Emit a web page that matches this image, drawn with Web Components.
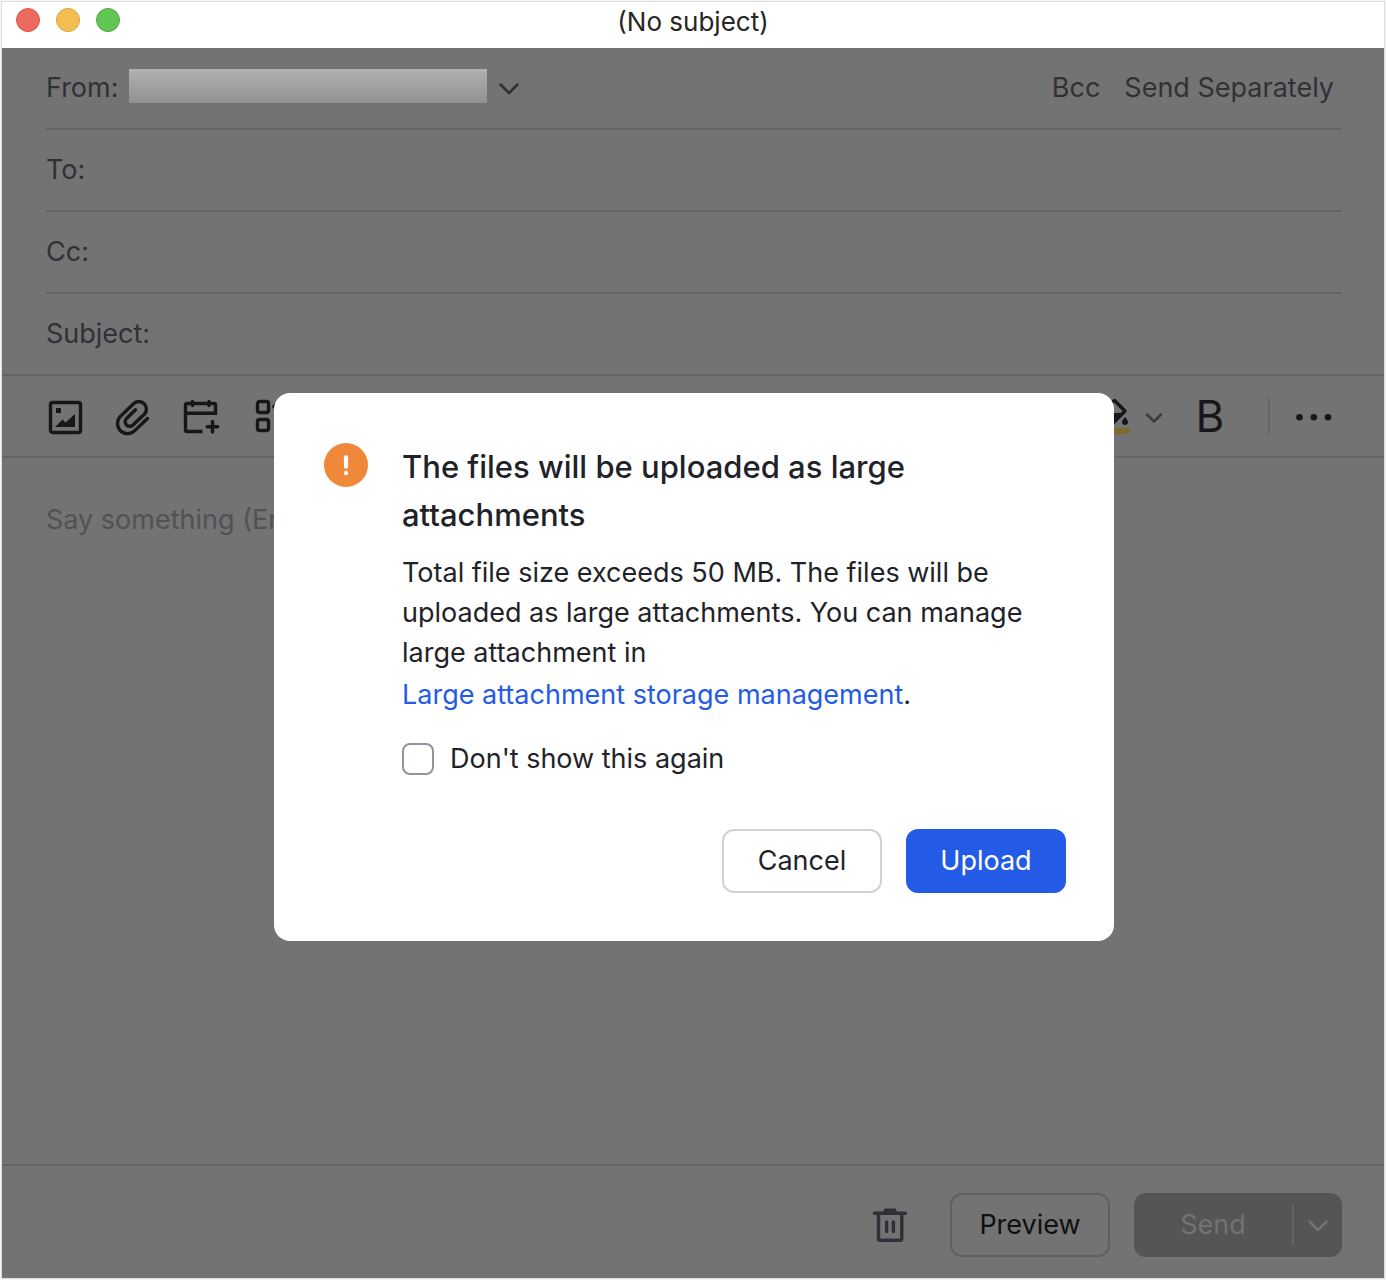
<!DOCTYPE html>
<html lang="en">
<head>
<meta charset="utf-8">
<title>(No subject)</title>
<style>
    body {
        margin: 0;
        font: 400 27px/40px Inter, "Liberation Sans", sans-serif;
        color: #303136;
        --panel: #737373;
        --line: #646464;
        --ink: #15171a;
    }
</style>
</head>
<body>
<mail-window heading="(No subject)">
    <mail-field slot="fields" label="From:" kind="sender">
        <mail-link-button slot="actions">Bcc</mail-link-button>
        <mail-link-button slot="actions">Send Separately</mail-link-button>
    </mail-field>
    <mail-field slot="fields" label="To:"></mail-field>
    <mail-field slot="fields" label="Cc:"></mail-field>
    <mail-field slot="fields" label="Subject:" last></mail-field>
    <mail-toolbar slot="toolbar"></mail-toolbar>
    <mail-editor slot="editor" placeholder="Say something (Enter"></mail-editor>
    <mail-footer slot="footer"></mail-footer>
    <confirm-dialog slot="dialog" heading="The files will be uploaded as large attachments">
        Total file size exceeds 50 MB. The files will be uploaded as large attachments. You can manage large attachment in
        <storage-link slot="link">Large attachment storage management</storage-link>
    </confirm-dialog>
</mail-window>

<script>
const ICONS = {
    image: `<rect x="4.5" y="6.5" width="30" height="30" rx="2"/>
        <path class="fill" d="M10 12h5v5h-5zM9 31l7.500-7.500 3 3L29 18v13z"/>`,
    clip: `<path stroke-linecap="round" d="M33.500 22.500 20.800 34.600A10 10 0 0 1 6.400 20.400L19.500 7.700A7.500 7.500 0 0 1 30.300 18.300L19 29A4.500 4.500 0 0 1 12.500 22.500L21.500 13.800"/>`,
    calendar: `<path d="M20.500 35.500H5A1.500 1.500 0 0 1 3.500 34V9A1.500 1.500 0 0 1 5 7.500H32A1.500 1.500 0 0 1 33.500 9V17.200H3.500"/>
        <path stroke-linecap="round" d="M10.500 5.500v4M27 5.500v4M30.500 25.500v10.500M25.200 30.700h10.500"/>`,
    apps: `<rect x="7.500" y="5.500" width="11" height="11" rx="2"/>
        <rect x="7.500" y="23.500" width="11" height="11" rx="2"/>
        <rect x="26.500" y="23.500" width="11" height="11" rx="2"/>
        <path d="M24 10.500 31.500 3l7.500 7.500-7.500 7.500z"/>`,
    bucket: `<path stroke-linejoin="round" d="M22.500 4.500 33 15 21 27 8.500 15z"/>
        <path class="fill" d="M8 17h25L21 28z"/>
        <path class="fill" d="M33 21c1.800 2.200 3 3.600 3 5a3 3 0 0 1-6 0c0-1.400 1.200-2.800 3-5z"/>
        <rect x="2" y="32" width="36" height="6" rx="3" fill="#7d6a2f" stroke="none"/>`,
    dots: `<g class="fill"><circle cx="5.500" cy="21.300" r="3.300"/><circle cx="19.800" cy="21.300" r="3.300"/><circle cx="34" cy="21.300" r="3.300"/></g>`,
    trash: `<path stroke-linecap="round" d="M4.500 8.300h31"/>
        <path class="fill" d="M13.500 8V5.500A2 2 0 0 1 15.500 3.500h9A2 2 0 0 1 26.500 5.500V8z"/>
        <path d="M8.500 9V34A1.200 1.200 0 0 0 9.700 35.200H30.600A1.200 1.200 0 0 0 31.800 34V9"/>
        <path stroke-linecap="round" d="M16.600 17v9.500M23.400 17v9.500"/>`,
    chevron: `<path stroke-width="2.500" stroke-linecap="round" stroke-linejoin="round" d="M11.500 16.500 20 25l8.500-8.500"/>`,
    small: `<path stroke-width="2.500" stroke-linecap="round" stroke-linejoin="round" d="M13 18.500 20 25.500l7-7"/>`,
    alert: `<circle cx="20" cy="20" r="20" fill="#f0883a" stroke="none"/>
        <path stroke="#fff" stroke-width="3.800" stroke-linecap="round" d="M20 13v8.500"/>
        <circle cx="20" cy="27.300" r="2" fill="#fff" stroke="none"/>`,
};

class MailIcon extends HTMLElement {
    constructor() {
        super();
        this.attachShadow({ mode: 'open' });
    }

    connectedCallback() {
        this.shadowRoot.innerHTML = `
        <style>
            :host {
                display: block;
                flex: none;
                width: 40px;
                height: 40px;
            }
            svg {
                display: block;
                width: 100%;
                height: 100%;
            }
            .fill {
                fill: currentColor;
                stroke: none;
            }
        </style>
        <svg viewBox="0 0 40 40" fill="none" stroke="currentColor" stroke-width="3.4" aria-hidden="true">${ICONS[this.getAttribute('name')]}</svg>
        `;
    }
}

class MailWindow extends HTMLElement {
    constructor() {
        super();
        this.attachShadow({ mode: 'open' });
    }

    connectedCallback() {
        this.shadowRoot.innerHTML = `
        <style>
            :host {
                display: block;
                box-sizing: border-box;
                border: 1px solid #f6f6f6;
            }
            .frame {
                display: flex;
                flex-direction: column;
                box-sizing: border-box;
                min-height: calc(100vh - 2px);
                border: 1px solid #dedede;
            }
            header {
                display: grid;
                grid-template-columns: 1fr auto 1fr;
                height: 46px;
                padding: 0 14px;
                background: #fff;
                color: #262626;
            }
            h1 {
                margin: 0;
                font-size: 26px;
                font-weight: 400;
                line-height: 40px;
            }
            .lights {
                display: flex;
                gap: 16px;
                padding-top: 6px;
            }
            .lights span {
                box-sizing: border-box;
                width: 24px;
                height: 24px;
                border: 1px solid #d5544a;
                border-radius: 50%;
                background: #ed6a5e;
            }
            .lights span:nth-child(2) {
                border-color: #d9a03c;
                background: #f5bf4f;
            }
            .lights span:nth-child(3) {
                border-color: #4ea73f;
                background: #61c554;
            }
            main {
                position: relative;
                display: flex;
                flex: 1;
                flex-direction: column;
                background: var(--panel);
            }
            .overlay {
                position: absolute;
                inset: 0;
                display: grid;
                place-items: center;
                padding: 8px 0 0 2px;
            }
        </style>
        <div class="frame">
            <header>
                <div class="lights"><span></span><span></span><span></span></div>
                <h1></h1>
            </header>
            <main>
                <slot name="fields"></slot>
                <slot name="toolbar"></slot>
                <slot name="editor"></slot>
                <slot name="footer"></slot>
                <div class="overlay"><slot name="dialog"></slot></div>
            </main>
        </div>
        `;
        this.shadowRoot.querySelector('h1').textContent = this.getAttribute('heading');
    }
}

class MailField extends HTMLElement {
    constructor() {
        super();
        this.attachShadow({ mode: 'open' });
    }

    connectedCallback() {
        const isSender = this.getAttribute('kind') === 'sender';
        const control = isSender
            ? '<button id="control" type="button" aria-label="Sender address"><span class="address"></span><mail-icon name="chevron"></mail-icon></button>'
            : '<input id="control" type="text">';

        this.shadowRoot.innerHTML = `
        <style>
            :host {
                display: block;
                padding: 0 42px 0 44px;
            }
            :host([last]) {
                border-bottom: 2px solid var(--line);
            }
            .row {
                display: flex;
                align-items: center;
                gap: 11px;
                height: 80px;
                border-bottom: 2px solid var(--line);
            }
            :host([last]) .row {
                border-bottom: 0;
            }
            input {
                flex: 1;
                min-width: 0;
                border: 0;
                padding: 0;
                outline: 0;
                background: transparent;
                color: inherit;
                font: inherit;
            }
            button {
                display: flex;
                align-items: center;
                gap: 2px;
                border: 0;
                padding: 0;
                background: transparent;
                color: inherit;
            }
            .address {
                width: 358px;
                height: 34px;
                margin-bottom: 4px;
                background: linear-gradient(#b0b1b0, #919191);
            }
            .actions {
                display: flex;
                gap: 24px;
                margin-left: auto;
                padding-right: 8px;
            }
        </style>
        <div class="row">
            <label for="control">${this.getAttribute('label')}</label>
            ${control}
            ${isSender ? '<div class="actions"><slot name="actions"></slot></div>' : ''}
        </div>
        `;
    }
}

class MailLinkButton extends HTMLElement {
    constructor() {
        super();
        this.attachShadow({ mode: 'open' });
        this.shadowRoot.innerHTML = `
        <style>
            :host {
                display: block;
            }
            button {
                border: 0;
                padding: 0;
                background: transparent;
                color: inherit;
                font: inherit;
            }
        </style>
        <button type="button"><slot></slot></button>
        `;
    }
}

class MailToolbar extends HTMLElement {
    constructor() {
        super();
        this.attachShadow({ mode: 'open' });
        this.shadowRoot.innerHTML = `
        <style>
            :host {
                display: flex;
                justify-content: space-between;
                align-items: center;
                height: 80px;
                padding: 0 50px 0 44px;
                border-bottom: 2px solid var(--line);
                color: var(--ink);
            }
            .group {
                display: flex;
                align-items: center;
                gap: 28px;
            }
            .group.end {
                gap: 16px;
            }
            button {
                display: flex;
                align-items: center;
                justify-content: center;
                gap: 2px;
                min-width: 40px;
                height: 40px;
                border: 0;
                padding: 0;
                background: transparent;
                color: inherit;
                font: inherit;
            }
            .bold {
                font-size: 44px;
                font-weight: 400;
            }
            .arrow {
                color: #3b3c3f;
            }
            .rule {
                width: 2px;
                height: 36px;
                margin: 0 8px 0 22px;
                background: var(--line);
            }
        </style>
        <div class="group">
            <button type="button" aria-label="Insert image"><mail-icon name="image"></mail-icon></button>
            <button type="button" aria-label="Attach file"><mail-icon name="clip"></mail-icon></button>
            <button type="button" aria-label="Add event"><mail-icon name="calendar"></mail-icon></button>
            <button type="button" aria-label="Apps"><mail-icon name="apps"></mail-icon></button>
        </div>
        <div class="group end">
            <button type="button" aria-label="Highlight colour"><mail-icon name="bucket"></mail-icon><mail-icon class="arrow" name="small"></mail-icon></button>
            <button class="bold" type="button" aria-label="Bold">B</button>
            <span class="rule"></span>
            <button type="button" aria-label="More"><mail-icon name="dots"></mail-icon></button>
        </div>
        `;
    }
}

class MailEditor extends HTMLElement {
    constructor() {
        super();
        this.attachShadow({ mode: 'open' });
        this.shadowRoot.innerHTML = `
        <style>
            :host {
                display: flex;
                flex: 1;
                padding: 42px 44px;
            }
            textarea {
                flex: 1;
                border: 0;
                padding: 0;
                outline: 0;
                resize: none;
                background: transparent;
                color: inherit;
                font: inherit;
            }
            textarea::placeholder {
                color: #505255;
                opacity: 1;
            }
        </style>
        <textarea aria-label="Message"></textarea>
        `;
    }

    connectedCallback() {
        this.shadowRoot.querySelector('textarea').placeholder = this.getAttribute('placeholder');
    }
}

class MailFooter extends HTMLElement {
    constructor() {
        super();
        this.attachShadow({ mode: 'open' });
        this.shadowRoot.innerHTML = `
        <style>
            :host {
                display: flex;
                justify-content: flex-end;
                align-items: center;
                gap: 24px;
                padding: 27px 42px 21px;
                border-top: 2px solid var(--line);
            }
            button {
                border: 0;
                padding: 0;
                background: transparent;
                color: inherit;
                font: inherit;
            }
            .trash {
                margin-right: 16px;
            }
            .preview {
                box-sizing: border-box;
                width: 160px;
                height: 64px;
                border: 2px solid #606060;
                border-radius: 12px;
                color: #0f1011;
            }
            .split {
                display: flex;
                align-items: center;
                height: 64px;
                border-radius: 12px;
                background: #545557;
                color: #737373;
            }
            .send {
                width: 158px;
            }
            .more {
                display: flex;
                align-items: center;
                justify-content: center;
                width: 50px;
                height: 40px;
                box-sizing: border-box;
                border-left: 2px solid #646566;
            }
        </style>
        <button class="trash" type="button" aria-label="Discard"><mail-icon name="trash"></mail-icon></button>
        <button class="preview" type="button">Preview</button>
        <div class="split">
            <button class="send" type="button">Send</button>
            <button class="more" type="button" aria-label="Send options"><mail-icon name="chevron"></mail-icon></button>
        </div>
        `;
    }
}

class StorageLink extends HTMLElement {
    constructor() {
        super();
        this.attachShadow({ mode: 'open' });
        this.shadowRoot.innerHTML = `
        <style>
            :host {
                display: block;
                line-height: 44px;
            }
            a {
                color: #245be6;
                text-decoration: none;
            }
        </style>
        <a href="#storage"><slot></slot></a>.
        `;
    }
}

class ConfirmDialog extends HTMLElement {
    constructor() {
        super();
        this.attachShadow({ mode: 'open' });
    }

    connectedCallback() {
        this.shadowRoot.innerHTML = `
        <style>
            :host {
                display: block;
                box-sizing: border-box;
                width: 840px;
                max-width: 100%;
                padding: 48px;
                border-radius: 16px;
                background: #fff;
                color: #1f2329;
            }
            .body {
                display: flex;
                gap: 32px;
            }
            .badge {
                flex: none;
                display: grid;
                place-items: center;
                width: 48px;
                height: 48px;
            }
            .badge mail-icon {
                width: 44px;
                height: 44px;
            }
            h2 {
                margin: 0;
                padding: 2px 0 14px;
                font-size: 31px;
                font-weight: 500;
                line-height: 48px;
            }
            label {
                display: flex;
                align-items: center;
                gap: 16px;
                height: 36px;
                margin-top: 24px;
            }
            input {
                appearance: none;
                box-sizing: border-box;
                width: 32px;
                height: 32px;
                margin: 0;
                border: 2px solid #8f959e;
                border-radius: 8px;
            }
            input:checked {
                background: #245be6;
            }
            .actions {
                display: flex;
                justify-content: flex-end;
                gap: 24px;
                margin-top: 52px;
            }
            button {
                box-sizing: border-box;
                width: 160px;
                height: 64px;
                padding: 0;
                border: 2px solid #d0d3d6;
                border-radius: 12px;
                background: #fff;
                color: inherit;
                font: inherit;
            }
            .primary {
                border-color: #245be6;
                background: #245be6;
                color: #fff;
            }
        </style>
        <div role="dialog" aria-labelledby="heading">
            <div class="body">
                <div class="badge"><mail-icon name="alert"></mail-icon></div>
                <div>
                    <h2 id="heading">${this.getAttribute('heading')}</h2>
                    <div><slot></slot></div>
                    <slot name="link"></slot>
                    <label><input type="checkbox">Don't show this again</label>
                </div>
            </div>
            <div class="actions">
                <button type="button">Cancel</button>
                <button class="primary" type="button">Upload</button>
            </div>
        </div>
        `;
    }
}

customElements.define('mail-icon', MailIcon);
customElements.define('mail-window', MailWindow);
customElements.define('mail-field', MailField);
customElements.define('mail-link-button', MailLinkButton);
customElements.define('mail-toolbar', MailToolbar);
customElements.define('mail-editor', MailEditor);
customElements.define('mail-footer', MailFooter);
customElements.define('storage-link', StorageLink);
customElements.define('confirm-dialog', ConfirmDialog);
</script>
</body>
</html>
